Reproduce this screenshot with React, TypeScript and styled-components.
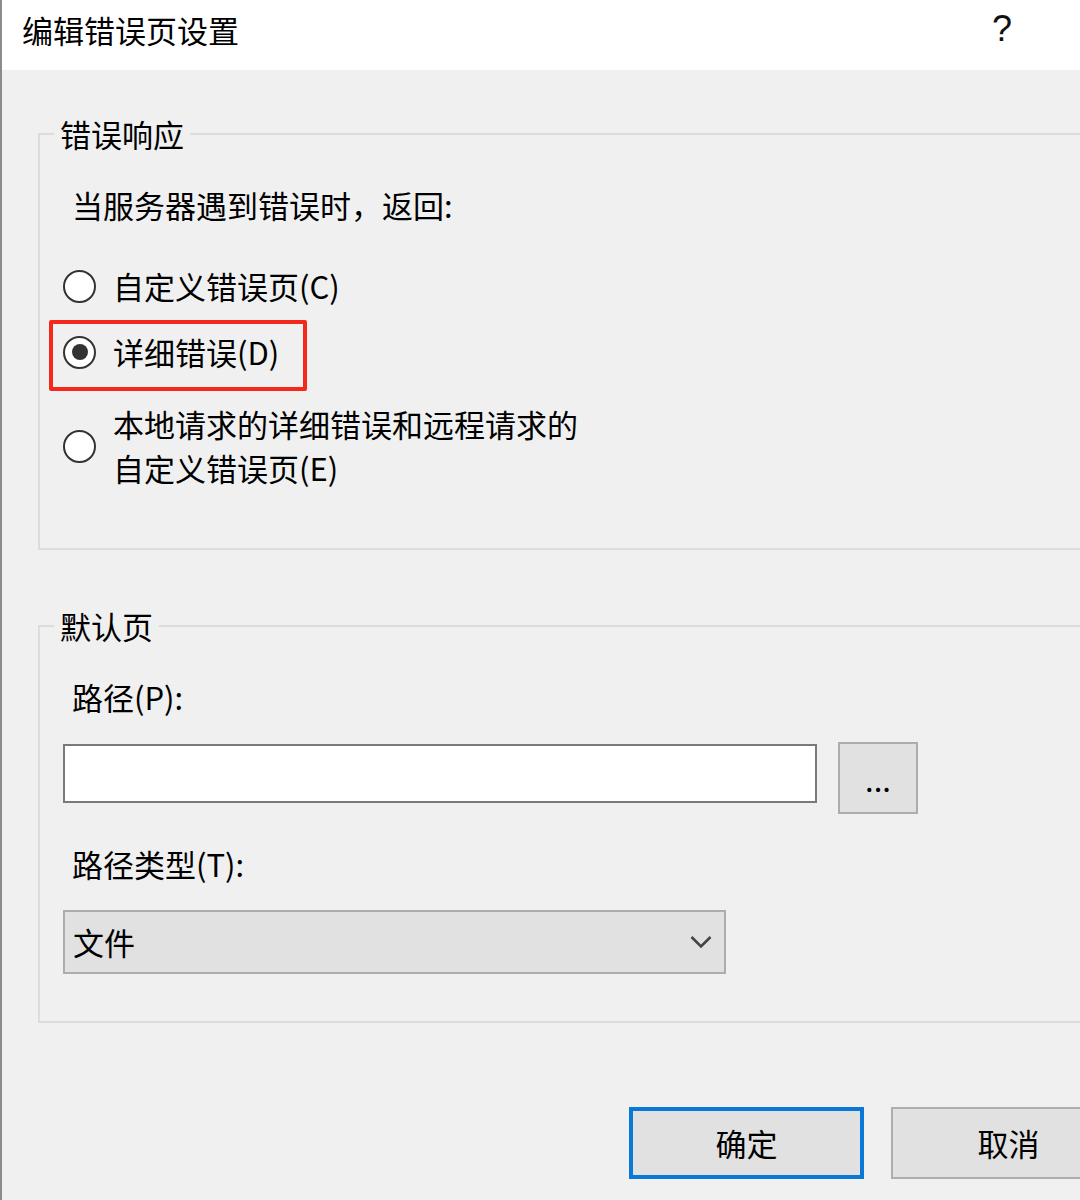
import React from "react";
import styled, { createGlobalStyle } from "styled-components";

const GlobalStyle = createGlobalStyle`
  html, body {
    margin: 0;
    padding: 0;
    background: #f0f0f0;
    overflow: hidden;
  }
  body {
    font-family: "Noto Sans CJK SC", "Microsoft YaHei", sans-serif;
    color: #000;
  }
`;

const Dialog = styled.div`
  width: 1140px;
  height: 1200px;
  box-sizing: border-box;
  border-left: 2px solid #8c8c8c;
  background: #f0f0f0;
  display: flex;
  flex-direction: column;
`;

const TitleBar = styled.div`
  height: 70px;
  flex-shrink: 0;
  background: #fff;
  display: flex;
  align-items: flex-start;
  padding: 0 92px 0 20px;
`;

const Title = styled.div`
  flex: 1;
  font-size: 31px;
  line-height: 60px;
`;

const HelpButton = styled.div`
  width: 92px;
  height: 58px;
  display: flex;
  align-items: center;
  justify-content: center;
  font-family: "Liberation Sans", Arial, sans-serif;
  font-size: 36px;
  line-height: 1;
  color: #111;
`;

const Body = styled.div`
  padding: 0 14px 0 36px;
  display: flex;
  flex-direction: column;
`;

const Group = styled.fieldset<{ $top: number; $bottom: number }>`
  margin: ${({ $top }) => $top}px 0 0;
  padding: 30px 0 ${({ $bottom }) => $bottom}px 14px;
  border: 2px solid #dcdcdc;
  min-width: 0;
`;

const Legend = styled.legend`
  padding: 0 6px;
  font-size: 31px;
  line-height: 38px;
  margin-bottom: 2px;
`;

const Content = styled.div`
  padding-left: 9px;
  display: flex;
  flex-direction: column;
`;

const Label = styled.div<{ $after?: number }>`
  padding-left: 9px;
  font-size: 31px;
  line-height: 40px;
  margin-bottom: ${({ $after }) => $after ?? 0}px;
`;

const OptionRow = styled.label<{ $after?: number }>`
  display: flex;
  align-items: center;
  gap: 17px;
  font-size: 31px;
  line-height: 40px;
  margin-bottom: ${({ $after }) => $after ?? 0}px;
`;

const OptionText = styled.span<{ $tall?: boolean }>`
  line-height: ${({ $tall }) => ($tall ? 44 : 40)}px;
`;

const Highlight = styled.div`
  width: 258px;
  box-sizing: border-box;
  margin-left: -14px;
  margin-bottom: 11px;
  padding: 8px 0 15px 10px;
  border: 4px solid #f5291b;
  border-radius: 2px;
`;

const Radio = styled.span<{ $checked?: boolean }>`
  width: 33px;
  height: 33px;
  flex-shrink: 0;
  box-sizing: border-box;
  border: 2px solid #333;
  border-radius: 50%;
  background: #fff;
  display: flex;
  align-items: center;
  justify-content: center;

  &::after {
    content: "";
    display: ${({ $checked }) => ($checked ? "block" : "none")};
    width: 16px;
    height: 16px;
    border-radius: 50%;
    background: #333;
  }
`;

const FieldRow = styled.div`
  display: flex;
  align-items: flex-start;
  gap: 21px;
  margin-bottom: 30px;
`;

const TextInput = styled.div`
  width: 754px;
  height: 59px;
  margin-top: 2px;
  box-sizing: border-box;
  border: 2px solid #7a7a7a;
  background: #fff;
`;

const BrowseButton = styled.div`
  width: 80px;
  height: 72px;
  box-sizing: border-box;
  border: 2px solid #adadad;
  background: #e1e1e1;
  display: flex;
  align-items: center;
  justify-content: center;
  font-size: 31px;
  line-height: 1;
`;

const Select = styled.div`
  width: 663px;
  height: 64px;
  box-sizing: border-box;
  border: 2px solid #adadad;
  background: #e1e1e1;
  display: flex;
  align-items: center;
  justify-content: space-between;
  padding: 0 12px 0 8px;
  font-size: 31px;
  line-height: 40px;
`;

const Footer = styled.div`
  margin-top: 84px;
  display: flex;
  justify-content: flex-end;
  gap: 27px;
`;

const Button = styled.div<{ $primary?: boolean }>`
  width: 235px;
  height: 72px;
  box-sizing: border-box;
  border: ${({ $primary }) => ($primary ? "4px solid #0a78d7" : "2px solid #adadad")};
  background: #e1e1e1;
  display: flex;
  align-items: center;
  justify-content: center;
  font-size: 31px;
  line-height: 40px;
`;

const Chevron = () => (
  <svg width="22" height="14" viewBox="0 0 22 14">
    <polyline points="1.5,2 11,11.5 20.5,2" fill="none" stroke="#444" strokeWidth="2.6" />
  </svg>
);

export default function App() {
  return (
    <>
      <GlobalStyle />
      <Dialog>
        <TitleBar>
          <Title>编辑错误页设置</Title>
          <HelpButton>?</HelpButton>
        </TitleBar>

        <Body>
          <Group $top={45} $bottom={58}>
            <Legend>错误响应</Legend>
            <Content>
              <Label $after={41}>当服务器遇到错误时，返回:</Label>
              <OptionRow $after={14}>
                <Radio />
                <OptionText>自定义错误页(C)</OptionText>
              </OptionRow>
              <Highlight>
                <OptionRow>
                  <Radio $checked />
                  <OptionText>详细错误(D)</OptionText>
                </OptionRow>
              </Highlight>
              <OptionRow>
                <Radio />
                <OptionText $tall>
                  本地请求的详细错误和远程请求的
                  <br />
                  自定义错误页(E)
                </OptionText>
              </OptionRow>
            </Content>
          </Group>

          <Group $top={57} $bottom={47}>
            <Legend>默认页</Legend>
            <Content>
              <Label $after={25}>路径(P):</Label>
              <FieldRow>
                <TextInput />
                <BrowseButton>...</BrowseButton>
              </FieldRow>
              <Label $after={26}>路径类型(T):</Label>
              <Select>
                <span>文件</span>
                <Chevron />
              </Select>
            </Content>
          </Group>

          <Footer>
            <Button $primary>确定</Button>
            <Button>取消</Button>
          </Footer>
        </Body>
      </Dialog>
    </>
  );
}
